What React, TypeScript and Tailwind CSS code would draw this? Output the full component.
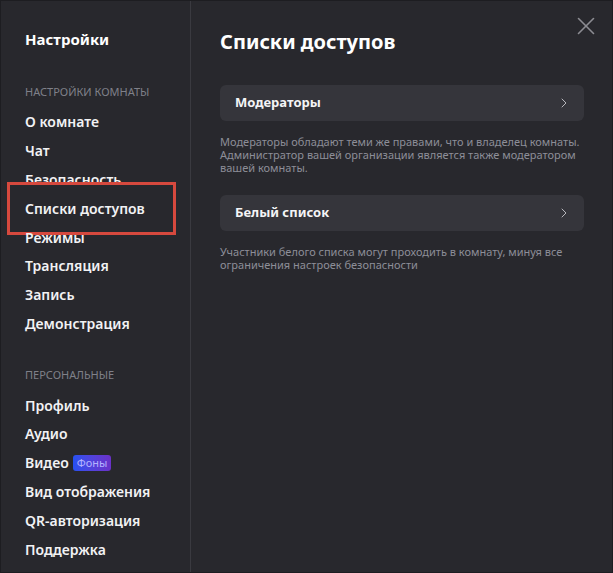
import { ChevronRight, X } from "lucide-react";

const roomItems = ["О комнате", "Чат", "Безопасность", "Списки доступов", "Режимы", "Трансляция", "Запись", "Демонстрация"];
const personalItems = ["Профиль", "Аудио", "Видео", "Вид отображения", "QR-авторизация", "Поддержка"];

const NavItem = ({ label, active }: { label: string; active?: boolean }) => (
  <div className="relative flex h-[28.9px] items-center text-[14px] font-semibold text-[#f2f2f4]">
    {label}
    {label === "Видео" && (
      <span className="ml-[4px] rounded-[3px] bg-gradient-to-r from-[#2450f0] to-[#6a31c8] px-[4px] text-[11px] font-normal leading-[16px] text-[#b4b3ff]">
        Фоны
      </span>
    )}
    {active && <div className="absolute -left-[18px] -top-[12px] h-[53px] w-[169px] border-[3px] border-[#d6493e]" />}
  </div>
);

const Row = ({ label }: { label: string }) => (
  <div className="flex h-[36px] items-center justify-between rounded-[6px] bg-[#35353b] pl-[15px] pr-[12px]">
    <span className="text-[13px] font-bold text-[#f4f4f6]">{label}</span>
    <ChevronRight size={16} strokeWidth={1.5} className="text-[#b8b8bd]" />
  </div>
);

export default function App() {
  return (
    <div
      className="flex h-[573px] w-[613px] border border-[#1d1d21] bg-[#28282d]"
      style={{ fontFamily: '"Noto Sans", "Open Sans", sans-serif' }}
    >
      <aside className="w-[190px] shrink-0 border-r border-[#3a3a40] pl-[24px] pt-[27px]">
        <div className="text-[15px] font-bold text-white">Настройки</div>
        <div className="mt-[33px] text-[11px] uppercase text-[#7f8089]">Настройки комнаты</div>
        <div className="mt-[7px]">
          {roomItems.map((l) => (
            <NavItem key={l} label={l} active={l === "Списки доступов"} />
          ))}
        </div>
        <div className="mt-[29px] text-[11px] uppercase text-[#7f8089]">Персональные</div>
        <div className="mt-[7px]">
          {personalItems.map((l) => (
            <NavItem key={l} label={l} />
          ))}
        </div>
      </aside>
      <main className="relative flex-1 pl-[29px] pr-[28px] pt-[27px]">
        <X size={30} strokeWidth={1.3} className="absolute right-[11px] top-[10px] text-[#8c8c92]" />
        <h1 className="text-[20px] font-bold leading-[28px] text-white">Списки доступов</h1>
        <div className="mt-[29px]">
          <Row label="Модераторы" />
          <p className="mt-[14px] text-[11px] leading-[13px] text-[#8d8e98]">
            Модераторы обладают теми же правами, что и владелец комнаты. Администратор вашей организации является также модератором вашей комнаты.
          </p>
        </div>
        <div className="mt-[21px]">
          <Row label="Белый список" />
          <p className="mt-[14px] text-[11px] leading-[13px] text-[#8d8e98]">
            Участники белого списка могут проходить в комнату, минуя все ограничения настроек безопасности
          </p>
        </div>
      </main>
    </div>
  );
}
